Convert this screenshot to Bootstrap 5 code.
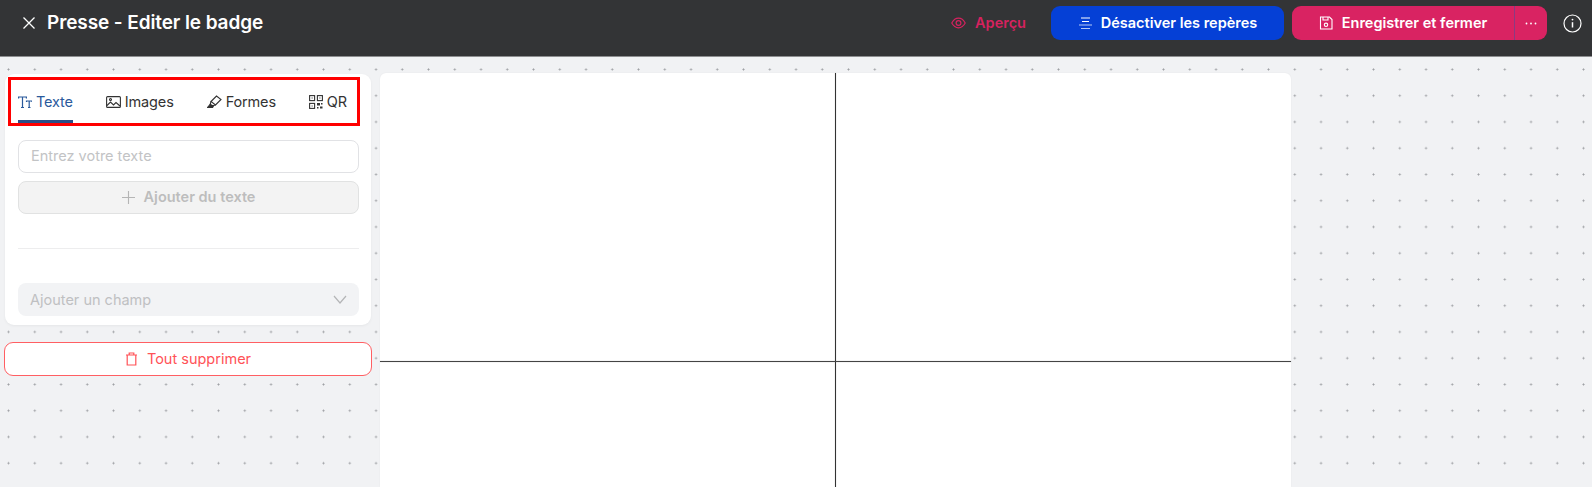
<!DOCTYPE html>
<html lang="fr">
<head>
<meta charset="utf-8">
<title>Presse - Editer le badge</title>
<link href="https://cdn.jsdelivr.net/npm/bootstrap@5.3.0/dist/css/bootstrap.min.css" rel="stylesheet">
<style>
html,body{height:487px;overflow:hidden}
body{font-family:Inter,"Liberation Sans",sans-serif;background-color:#f1f2f4;color:#333;font-size:15px}
.topbar{height:57px;background:#333436;border-bottom:1px solid #8d8e90;padding:6px 0 0 22px;align-items:flex-start}
.topbar-close{height:34px;width:16px}
.topbar-title{font-size:19px;font-weight:600;color:#fff;line-height:34px;margin-left:9px;letter-spacing:-.1px}
.action-preview{color:#d6225f;font-weight:600;font-size:14.5px;height:34px;gap:9px;margin-right:25px}
.btn-guides{background:#0540d6;color:#fff;font-weight:600;font-size:14.5px;height:34px;width:233px;border-radius:9px;gap:8px;border:0;margin-right:8px;padding:0}
.btn-guides:hover{background:#0540d6;color:#fff}
.save-group{height:34px;width:255px;background:#d92362;border-radius:9px;margin-right:16px;color:#fff}
.btn-save{flex:1;color:#fff;font-weight:600;font-size:14.5px;gap:9px;border:0;padding:0;height:34px}
.btn-save:hover{color:#fff}
.save-divider{width:1px;height:34px;flex:none;background:#8a3a82}
.btn-more{width:32px;flex:none;height:34px;color:#fff;padding:0 0 0 0;border:0;border-radius:0}
.info-wrap{width:19px;height:34px;margin-right:10px}
.workspace{height:430px;overflow:hidden;background-image:radial-gradient(circle at center,#9b9da1 0,#9b9da1 .8px,transparent 1.2px);background-size:26.25px 26.25px;background-position:-4.6px -.7px;padding:16px 0 0 5px;gap:9px}
.side{width:366px;flex:none}
.panel{height:251px;margin-top:1px;background:#fff;border-radius:9px;padding:3px 4px 0 3px;box-shadow:0 1px 3px rgba(0,0,0,.05)}
.tab-frame{height:49px;border:3px solid #f00;margin-right:7px;margin-bottom:14px}
.tabs-line{justify-content:space-between;padding:0 10px 0 7px}
.tab-item{font-size:14.5px;color:#333;height:43px;gap:4px;padding:0;letter-spacing:-.15px}
.tab-item.is-active{color:#2a5a9c;box-shadow:inset 0 -3px 0 #2c4f87}
.form-area{padding:0 8px 0 10px}
.text-field{height:33px;border:1px solid #e1e2e5;border-radius:8px;font-size:14.5px;padding:0 12px 2px;box-shadow:none}
.text-field::placeholder{color:#c2c3c5}
.btn-add{height:33px;width:100%;margin-top:8px;background:#f3f3f3;border:1px solid #e1e2e2;border-radius:8px;color:#bdbdbd;font-weight:600;font-size:14.5px;gap:9px;padding:0 0 1px}
.sep{margin:34px 0;border:0;border-top:1px solid #ededee;opacity:1}
.field-select{height:33px;background:#f2f3f5;border-radius:8px;color:#bfc0c2;font-size:14.5px;padding:0 12px}
.btn-clear{width:368px;height:34px;margin:17px 0 0 -1px;background:#fff;border:1px solid #ff5f63;border-radius:9px;color:#ff5257;font-size:14.5px;gap:9px;padding:0}
.btn-clear:hover{background:#fff;color:#ff5257;border-color:#ff5f63}
.sheet{width:911px;height:414px;background:#fff;border-radius:6px 6px 0 0;position:relative;box-shadow:0 0 2px rgba(0,0,0,.06)}
.guide-v{position:absolute;left:455px;top:0;bottom:0;width:1px;background:#333;box-shadow:0 0 1px rgba(0,0,0,.4)}
.guide-h{position:absolute;left:0;right:0;top:288px;height:1px;background:#444;box-shadow:0 0 1px rgba(0,0,0,.4)}
</style>
</head>
<body class="m-0">
<header class="topbar d-flex">
  <div class="topbar-close d-flex align-items-center"><svg width="14" height="14" viewBox="0 0 14 14" fill="none" stroke="#fff" stroke-width="1.3"><path d="M1.500 1.500l11 11M12.500 1.500l-11 11"/></svg></div>
  <div class="topbar-title">Presse - Editer le badge</div>
  <div class="ms-auto d-flex align-items-start">
    <div class="action-preview d-flex align-items-center">
      <svg width="15" height="12" viewBox="0 0 15 12" fill="none" stroke="#d6225f" stroke-width="1.2"><path d="M.8 6C2.500 2.800 4.800 1.200 7.500 1.200S12.500 2.800 14.200 6C12.500 9.200 10.200 10.800 7.500 10.800S2.500 9.200.8 6z"/><circle cx="7.500" cy="6" r="2.400"/></svg>
      <span>Aperçu</span>
    </div>
    <button type="button" class="btn btn-guides d-flex align-items-center justify-content-center">
      <svg width="15" height="13" viewBox="0 0 15 13" fill="none" stroke="#fff" stroke-width="1.2"><path d="M3 1h9M4 4.500h7"/><path d="M1 8h13M3 11.500h9" stroke="#b8c9f5"/></svg>
      <span>Désactiver les repères</span>
    </button>
    <div class="save-group d-flex">
      <button type="button" class="btn btn-save d-flex align-items-center justify-content-center">
        <svg width="14" height="14" viewBox="0 0 14 14" fill="none" stroke="#fff" stroke-width="1.100"><path d="M1.500 1h9l2.500 2.500V13H1.500z"/><path d="M4 1v3h5V1"/><circle cx="7" cy="8.800" r="1.700"/></svg>
        <span>Enregistrer et fermer</span>
      </button>
      <span class="save-divider"></span>
      <button type="button" class="btn btn-more d-flex align-items-center justify-content-center" aria-label="Plus">
        <svg width="12" height="3" viewBox="0 0 12 3" fill="#fff"><circle cx="1.500" cy="1.500" r=".9"/><circle cx="6" cy="1.500" r=".9"/><circle cx="10.500" cy="1.500" r=".9"/></svg>
      </button>
    </div>
    <div class="info-wrap d-flex align-items-center">
      <svg width="19" height="19" viewBox="0 0 19 19" fill="none" stroke="#fff" stroke-width="1.200"><circle cx="9.500" cy="9.500" r="8.500"/><path d="M9.500 8.200v5.300" stroke-width="1.500"/><circle cx="9.500" cy="5.600" r=".9" fill="#fff" stroke="none"/></svg>
    </div>
  </div>
</header>
<main class="workspace d-flex align-items-start">
  <aside class="side">
    <section class="panel">
      <div class="tab-frame">
        <nav class="tabs-line d-flex">
          <div class="tab-item is-active d-flex align-items-center">
            <svg width="14" height="12" viewBox="0 0 14 12" fill="none" stroke="#2a5a9c" stroke-width="1.200"><path d="M.6 2.500V1h7.800v1.500M4.500 1v10.500M3 11.500h3M8.500 6V5H14v1M11.200 5v6.500M10 11.500h2.500"/></svg>
            <span>Texte</span>
          </div>
          <div class="tab-item d-flex align-items-center">
            <svg width="15" height="12" viewBox="0 0 15 12" fill="none" stroke="#333" stroke-width="1.100"><rect x=".6" y=".6" width="13.800" height="10.800" rx="1"/><path d="M1 9.500l3.500-3.500 3 3 2.500-2.500 4 3.500"/><circle cx="4.500" cy="3.500" r="1"/></svg>
            <span>Images</span>
          </div>
          <div class="tab-item d-flex align-items-center">
            <svg width="15" height="13" viewBox="0 0 15 13" fill="none" stroke="#333" stroke-width="1.100"><path d="M4 6.500L9.500 1l4.500 3.500-5.500 5.500z"/><path d="M4 6.500l-.8 3L5 11l3.500-1"/><path d="M3 9.500L.6 12.400h5l.8-1.400z" fill="#333"/></svg>
            <span>Formes</span>
          </div>
          <div class="tab-item d-flex align-items-center">
            <svg width="14" height="14" viewBox="0 0 14 14" fill="none" stroke="#333" stroke-width="1.100"><rect x=".6" y=".6" width="5" height="5"/><rect x="8.400" y=".6" width="5" height="5"/><rect x=".6" y="8.400" width="5" height="5"/><path d="M2.600 2.600h1v1h-1zM10.400 2.600h1v1h-1zM2.600 10.400h1v1h-1z" fill="#333" stroke="none"/><path d="M8 8h3v2.500H8zM12 8h1.500v1.500H12zM8 12h1.500v1.500H8zM11 11.500h2.500v2H11z" fill="#333" stroke="none"/></svg>
            <span>QR</span>
          </div>
        </nav>
      </div>
      <div class="form-area">
        <input type="text" class="form-control text-field" placeholder="Entrez votre texte">
        <button type="button" class="btn btn-add d-flex align-items-center justify-content-center">
          <svg width="13" height="13" viewBox="0 0 13 13" fill="none" stroke="#b5b5b5" stroke-width="1.100"><path d="M6.500 0v13M0 6.500h13"/></svg>
          <span>Ajouter du texte</span>
        </button>
        <hr class="sep">
        <div class="field-select d-flex align-items-center justify-content-between">
          <span>Ajouter un champ</span>
          <svg width="14" height="9" viewBox="0 0 14 9" fill="none" stroke="#b4b5b7" stroke-width="1.200"><path d="M1 1l6 7 6-7"/></svg>
        </div>
      </div>
    </section>
    <button type="button" class="btn btn-clear d-flex align-items-center justify-content-center">
      <svg width="13" height="14" viewBox="0 0 13 14" fill="none" stroke="#ff5257" stroke-width="1.200"><path d="M1 3h11M2.200 3v10h8.600V3M4.200 3V1h4.600v2"/></svg>
      <span>Tout supprimer</span>
    </button>
  </aside>
  <section class="sheet">
    <div class="guide-v"></div>
    <div class="guide-h"></div>
  </section>
</main>
<script src="https://cdn.jsdelivr.net/npm/bootstrap@5.3.0/dist/js/bootstrap.bundle.min.js"></script>
</body>
</html>
